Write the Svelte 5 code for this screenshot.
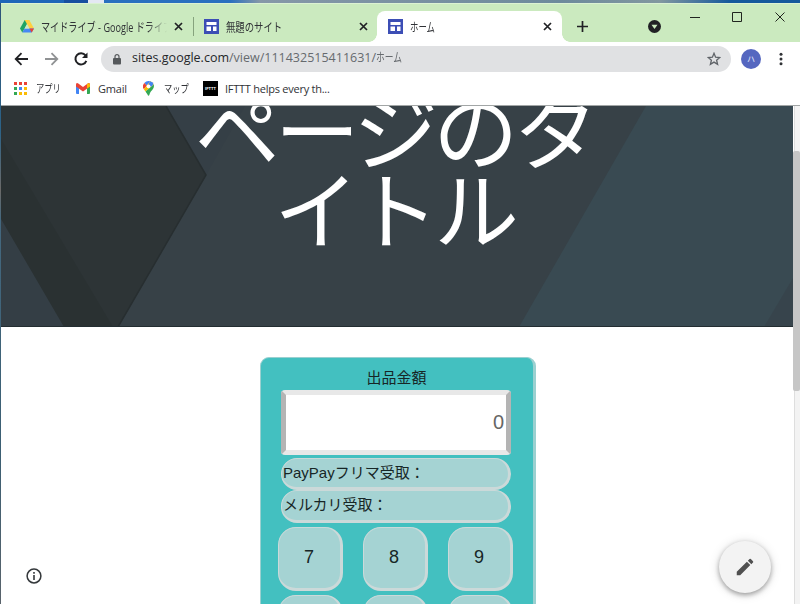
<script>
	const keys = ['7', '8', '9', '4', '5', '6'];

	let amount = '0';

	function press(key) {
		amount = amount === '0' ? key : amount + key;
	}
</script>

<div class="desktop">
	<div class="window">
		<header class="titlebar">
			<div class="tab first">
				<svg class="drive" width="14" height="13" viewBox="0 0 14 13">
					<path d="M4.7 0h4.6L4.6 8.4 2.3 12.4 0 8.4z" fill="#1fa463" />
					<path d="M4.7 0h4.6L14 8.4H9.4z" fill="#ffcf3f" />
					<path d="M4.6 8.4H14l-2.3 4H2.3z" fill="#4688f4" />
					<path d="M9.4 8.4H14l-2.3 4z" fill="#ea4335" />
					<path d="M7 4.2l2.4 4.2H4.6z" fill="#cbeabf" />
				</svg>
				<div class="tabtitle fade"><span class="narrow drivetitle">マイドライブ - Google ドライブ</span></div>
				<svg class="close" width="9" height="9" viewBox="0 0 9 9"><path d="M1 1l7 7M8 1L1 8" /></svg>
			</div>
			<div class="tab second">
				<svg class="sites" width="15" height="15" viewBox="0 0 15 15">
					<rect width="15" height="15" fill="#3c4eb5" />
					<path d="M2.500 3h10v3h-10zM2.500 7.500h4.500v4.500H2.500zM9 7.500h3.500v4.500H9z" fill="#fff" />
				</svg>
				<div class="tabtitle"><span class="narrow sitetitle">無題のサイト</span></div>
				<svg class="close" width="9" height="9" viewBox="0 0 9 9"><path d="M1 1l7 7M8 1L1 8" /></svg>
			</div>
			<div class="tab active">
				<svg class="sites" width="15" height="15" viewBox="0 0 15 15">
					<rect width="15" height="15" fill="#3c4eb5" />
					<path d="M2.500 3h10v3h-10zM2.500 7.500h4.500v4.500H2.500zM9 7.500h3.500v4.500H9z" fill="#fff" />
				</svg>
				<div class="tabtitle"><span class="narrow">ホーム</span></div>
				<svg class="close" width="9" height="9" viewBox="0 0 9 9"><path d="M1 1l7 7M8 1L1 8" /></svg>
			</div>
			<svg class="plus" width="11" height="11" viewBox="0 0 11 11">
				<path d="M5.500 0v11M0 5.500h11" stroke="#202124" stroke-width="1.700" />
			</svg>
			<svg class="search" width="13" height="13" viewBox="0 0 13 13">
				<circle cx="6.500" cy="6.500" r="6.500" fill="#202124" />
				<path d="M3.500 4.700h6L6.500 9z" fill="#cbeabf" />
			</svg>
			<svg class="controls" width="96" height="12" viewBox="0 0 96 12">
				<path d="M0 6.500h10M42.500 1.500h9v9h-9zM85.500 1.500l9 9M94.500 1.500l-9 9" fill="none" stroke="#20251f" />
			</svg>
		</header>

		<div class="toolbar">
			<svg class="arrows" width="90" height="26" viewBox="0 0 90 26" fill="none" stroke-width="1.800">
				<path d="M28 13H16M21.500 7.200L15.700 13l5.800 5.800" stroke="#202124" />
				<path d="M45 13h12M51.500 7.200L57.300 13l-5.800 5.800" stroke="#909294" />
				<path d="M85.500 9.400A5.600 5.600 0 1 0 86.300 14.800" stroke="#202124" stroke-width="2" />
				<path d="M87.500 6.500v5.500H82z" fill="#202124" />
			</svg>
			<div class="omnibox">
				<svg width="8" height="11" viewBox="0 0 8 11">
					<rect y="4" width="8" height="6.500" rx="1" fill="#55585b" />
					<path d="M2 4.500V2.700a2 2 0 0 1 4 0v1.800" fill="none" stroke="#55585b" stroke-width="1.200" />
				</svg>
				<div class="url"><b>sites.google.com</b>/view/111432515411631/<span class="narrow">ホーム</span></div>
				<svg width="14" height="14" viewBox="0 0 14 14">
					<path d="M7 1.300l1.600 3.900 4.200.3-3.200 2.700 1 4.100L7 10.100l-3.600 2.200 1-4.100-3.200-2.700 4.200-.3z" fill="none" stroke="#5f6368" stroke-width="1.300" />
				</svg>
			</div>
			<div class="avatar">ハ</div>
			<svg class="menu" width="4" height="14" viewBox="0 0 4 14" fill="#303236">
				<circle cx="2" cy="2.200" r="1.500" /><circle cx="2" cy="7" r="1.500" /><circle cx="2" cy="11.800" r="1.500" />
			</svg>
		</div>

		<nav class="bookmarks">
			<div class="mark apps">
				<svg width="13" height="13" viewBox="0 0 13 13">
					<path d="M0 0h3v3H0zM5 0h3v3H5zM10 0h3v3h-3z" fill="#ea4335" />
					<path d="M0 5h3v3H0z" fill="#34a853" /><path d="M5 5h3v3H5z" fill="#4285f4" />
					<path d="M10 5h3v3h-3zM5 10h3v3H5zM10 10h3v3h-3z" fill="#fbbc05" />
					<path d="M0 10h3v3H0z" fill="#34a853" />
				</svg>
				<span class="narrow">アプリ</span>
			</div>
			<div class="mark gmail">
				<svg width="14" height="11" viewBox="0 0 14 11">
					<path d="M0 2l3 2v7H1a1 1 0 0 1-1-1z" fill="#4285f4" />
					<path d="M14 2l-3 2v7h2a1 1 0 0 0 1-1z" fill="#34a853" />
					<path d="M0 3.500V1.500Q.3-.6 2.300.5L7 4l4.700-3.500Q13.700-.6 14 1.500v2L7 8.500z" fill="#ea4335" />
					<path d="M11 1v4.600l3-2.200V1.500Q13.300-.6 11 1z" fill="#fbbc04" />
				</svg>
				<span>Gmail</span>
			</div>
			<div class="mark maps">
				<svg width="11" height="15" viewBox="0 0 11 15">
					<path d="M5.500 0A5.500 5.500 0 0 0 1.300 2L4 4.500 7.300.3z" fill="#4285f4" />
					<path d="M1.300 2A5.200 5.200 0 0 0 .8 8.200L4 4.500z" fill="#ea4335" />
					<path d="M7.300.3A5.500 5.500 0 0 1 10.700 3.500L2.500 10.500.8 8.200z" fill="#fbbc04" />
					<path d="M10.700 3.500C12 8 7.500 9.500 6.500 13.500q-1 2.500-2 0L2.500 10.500z" fill="#34a853" />
					<path d="M7.300.3a5.500 5.500 0 0 1 3.200 2.800L8 6 5.500 3z" fill="#4285f4" />
					<circle cx="5.500" cy="5.300" r="1.900" fill="#fff" />
				</svg>
				<span class="narrow">マップ</span>
			</div>
			<div class="mark ifttt">
				<div class="iftttlogo"><span>IFTTT</span></div>
				<span>IFTTT helps every th...</span>
			</div>
		</nav>

		<main class="viewport">
			<div class="page">
				<section class="hero">
					<svg class="backdrop" width="792" height="221" viewBox="0 0 792 221">
						<defs>
							<linearGradient id="edge" gradientUnits="userSpaceOnUse" x1="564" y1="143" x2="576" y2="150">
								<stop offset="0" stop-color="#20282b" stop-opacity="0" />
								<stop offset="1" stop-color="#20282b" stop-opacity=".45" />
							</linearGradient>
						</defs>
						<rect width="792" height="221" fill="#374147" />
						<path d="M0 0h165l40 69-88 152H0z" fill="#2d3436" />
						<path d="M0 33l112 188H63L0 113z" fill="#2a3132" />
						<path d="M0 113l63 108H0z" fill="#343e45" />
						<path d="M165 0h79l-39 69z" fill="#353f46" />
						<path d="M165 0l40 69-88 152" fill="none" stroke="#272e30" stroke-width="1.500" />
						<path d="M633 0h12L518 221h-12z" fill="url(#edge)" />
						<path d="M645 0h147v221H518z" fill="#394a52" />
						<path d="M792 172v49h-29z" fill="#37444c" />
						<path d="M0 220.500h792" stroke="#232d31" />
					</svg>
					<h1>ページのタ<br />イトル</h1>
				</section>
				<section class="content">
					<div class="calculator">
						<div class="label">出品金額</div>
						<div class="display">{amount}</div>
						<div class="result">PayPayフリマ受取：</div>
						<div class="result">メルカリ受取：</div>
						<div class="keys">
							{#each keys as key}
								<button on:click={() => press(key)}>{key}</button>
							{/each}
						</div>
					</div>
				</section>
			</div>
			<div class="scrollbar"><div class="thumb"></div></div>
			<svg class="info" width="16" height="16" viewBox="0 0 16 16">
				<circle cx="8" cy="8" r="6.900" fill="none" stroke="#34383b" stroke-width="1.500" />
				<path d="M8 7v5M8 4v1.700" stroke="#34383b" stroke-width="1.600" />
			</svg>
			<div class="fab">
				<svg width="22" height="22" viewBox="0 0 24 24">
					<path d="M3 17.250V21h3.750L17.810 9.940l-3.750-3.750zM20.710 7.040a1 1 0 0 0 0-1.410l-2.340-2.340a1 1 0 0 0-1.410 0l-1.830 1.830 3.750 3.750z" fill="#505050" />
				</svg>
			</div>
		</main>
	</div>
</div>

<style>
	:global(body) {
		margin: 0;
	}
	.desktop {
		box-sizing: border-box;
		width: 800px;
		height: 604px;
		padding: 3px 0 0 1px;
		overflow: hidden;
		background: linear-gradient(90deg, #1e66b8 0 64px, #174fa0 64px 88px, #e4e8f2 88px 104px, #2a70bf 104px 230px, #8698a8 260px, #6d8a9c 560px, #8298a0 660px, #15599c 730px) top / 100% 3px no-repeat,
			linear-gradient(#2f5478, #2c6388 130px, #6b6a68 190px, #44687f 220px, #3b5f73 450px, #59636b);
		font-family: 'Open Sans', 'Noto Sans CJK JP', sans-serif;
		color: #303236;
	}
	.window {
		display: flex;
		flex-direction: column;
		height: 601px;
		background: #fff;
	}
	svg {
		display: block;
		flex: none;
	}
	.narrow {
		display: inline-block;
		white-space: nowrap;
		transform: scaleX(0.7);
		transform-origin: 0 50%;
	}

	.titlebar {
		display: flex;
		align-items: flex-end;
		box-sizing: border-box;
		height: 39px;
		border-top: 1px solid #dcf2d3;
		background: #cbeabf;
	}
	.tab {
		display: flex;
		align-items: center;
		box-sizing: border-box;
		height: 31px;
		font-size: 12px;
	}
	.tab.first {
		width: 193px;
		padding-left: 19px;
		background: linear-gradient(#86a37d, #86a37d) right 6px / 1px 19px no-repeat;
	}
	.tab.second {
		width: 183px;
		padding-left: 10px;
	}
	.tab.active {
		position: relative;
		width: 185px;
		padding-left: 11px;
		border-radius: 8px 8px 0 0;
		background: #fff;
	}
	.tab.active::before,
	.tab.active::after {
		content: '';
		position: absolute;
		bottom: 0;
		width: 8px;
		height: 8px;
	}
	.tab.active::before {
		left: -8px;
		background: radial-gradient(circle at 0 0, #cbeabf 7.5px, #fff 8px);
	}
	.tab.active::after {
		right: -8px;
		background: radial-gradient(circle at 100% 0, #cbeabf 7.5px, #fff 8px);
	}
	.tabtitle {
		width: 126px;
		margin-left: 7px;
		overflow: hidden;
		white-space: nowrap;
	}
	.fade {
		mask-image: linear-gradient(90deg, #000 85%, transparent);
	}
	.drivetitle {
		transform: scaleX(0.76);
	}
	.sitetitle {
		transform: scaleX(0.78);
	}
	.close {
		margin-left: 7px;
		fill: none;
		stroke: #202124;
		stroke-width: 1.7;
	}
	.plus {
		margin: 0 60px 10px 15px;
	}
	.search {
		margin-bottom: 9px;
	}
	.controls {
		margin: 0 0 19px 29px;
	}

	.toolbar {
		display: flex;
		align-items: center;
		height: 34px;
	}
	.arrows {
		margin-left: -1px;
	}
	.omnibox {
		display: flex;
		align-items: center;
		box-sizing: border-box;
		width: 630px;
		height: 26px;
		margin-left: 11px;
		padding: 0 10px 0 12px;
		border-radius: 13px;
		background: #e0e1e3;
	}
	.url {
		flex: 1;
		margin-left: 11px;
		font-size: 12.5px;
		line-height: 18px;
		padding-bottom: 2px;
		color: #666a6e;
		white-space: nowrap;
	}
	.url b {
		font-weight: 400;
		color: #25272a;
	}
	.avatar {
		width: 20px;
		height: 20px;
		margin-left: 10px;
		border-radius: 50%;
		background: #5567c0;
		color: #e8ebff;
		font-size: 8px;
		line-height: 19px;
		text-align: center;
	}
	.menu {
		margin-left: 18px;
	}

	.bookmarks {
		display: flex;
		box-sizing: border-box;
		height: 30px;
		padding: 0 0 4px 13px;
		border-bottom: 1px solid #a2a6a6;
		font-size: 11px;
		line-height: 15px;
	}
	.mark {
		display: flex;
		align-items: center;
		white-space: nowrap;
	}
	.apps {
		width: 62px;
		gap: 9px;
	}
	.apps .narrow,
	.maps .narrow {
		transform: scaleX(0.75);
	}
	.gmail {
		width: 67px;
		gap: 8px;
		letter-spacing: -0.2px;
	}
	.maps {
		width: 60px;
		gap: 10px;
	}
	.ifttt {
		gap: 7px;
		letter-spacing: -0.25px;
	}
	.iftttlogo {
		display: flex;
		align-items: center;
		justify-content: center;
		width: 15px;
		height: 15px;
		background: #000;
		color: #fff;
	}
	.iftttlogo span {
		font: 700 4px/1 'Liberation Sans', sans-serif;
		letter-spacing: 0;
	}

	.viewport {
		position: relative;
		display: flex;
		flex: 1;
		min-height: 0;
		overflow: hidden;
	}
	.page {
		width: 792px;
	}
	.hero {
		position: relative;
		height: 221px;
		overflow: hidden;
	}
	.backdrop {
		position: absolute;
		inset: 0;
	}
	h1 {
		position: relative;
		margin: -19px 0 0;
		padding-right: 6px;
		font: 400 85px/79px 'Noto Sans CJK JP', sans-serif;
		letter-spacing: -5px;
		color: #fff;
		text-align: center;
	}
	.content {
		padding-top: 30px;
	}
	.calculator {
		box-sizing: border-box;
		width: 276px;
		height: 400px;
		margin-left: 259px;
		padding: 10px 0 0 18px;
		border: solid #9bd0d0;
		border-width: 1px 3px 3px 1px;
		border-radius: 9px;
		background: #43c0c0;
		color: #172626;
		font: 15px/20px 'Liberation Sans', 'Noto Sans CJK JP', sans-serif;
	}
	.label {
		width: 235px;
		margin-bottom: 2px;
		text-align: center;
	}
	.display {
		box-sizing: border-box;
		width: 230px;
		height: 65px;
		margin-left: 2px;
		margin-bottom: 3px;
		padding-right: 2px;
		border: 5px solid;
		border-color: #e8e8e8 #b4b4b4;
		border-radius: 4px;
		background: #fff;
		color: #666;
		font-size: 20px;
		line-height: 55px;
		text-align: right;
	}
	.result {
		box-sizing: border-box;
		width: 230px;
		height: 32px;
		margin-left: 2px;
		padding-left: 1px;
		border: solid #cbd9d9;
		border-width: 1px 3px 3px 1px;
		border-radius: 16px;
		background: #a5d3d3;
		line-height: 28px;
		white-space: nowrap;
	}
	.result + .result {
		height: 33px;
	}
	.keys {
		display: grid;
		grid-template-columns: repeat(3, 65px);
		gap: 4px 20px;
		margin: 4px 0 0 -1px;
	}
	button {
		height: 64px;
		padding: 0 1px 1px 0;
		border: solid #cbd9d9;
		border-width: 1px 3px 3px 1px;
		border-radius: 18px;
		background: #a5d3d3;
		color: #172626;
		font: 18px 'Liberation Sans', sans-serif;
	}
	.scrollbar {
		box-sizing: border-box;
		width: 7px;
		padding-top: 45px;
		background: linear-gradient(90deg, #fff 1px, #dedede 1px 2px, #f3f3f3 2px);
	}
	.thumb {
		height: 240px;
		border-radius: 2px;
		background: #c6c6c6;
	}
	.info {
		position: absolute;
		left: 25px;
		bottom: 20px;
	}
	.fab {
		position: absolute;
		left: 718px;
		bottom: 11px;
		display: flex;
		align-items: center;
		justify-content: center;
		width: 52px;
		height: 52px;
		border-radius: 50%;
		background: #f3f3f3;
		box-shadow: 0 2px 5px rgba(0, 0, 0, 0.35), 0 1px 12px rgba(0, 0, 0, 0.12);
	}
</style>
